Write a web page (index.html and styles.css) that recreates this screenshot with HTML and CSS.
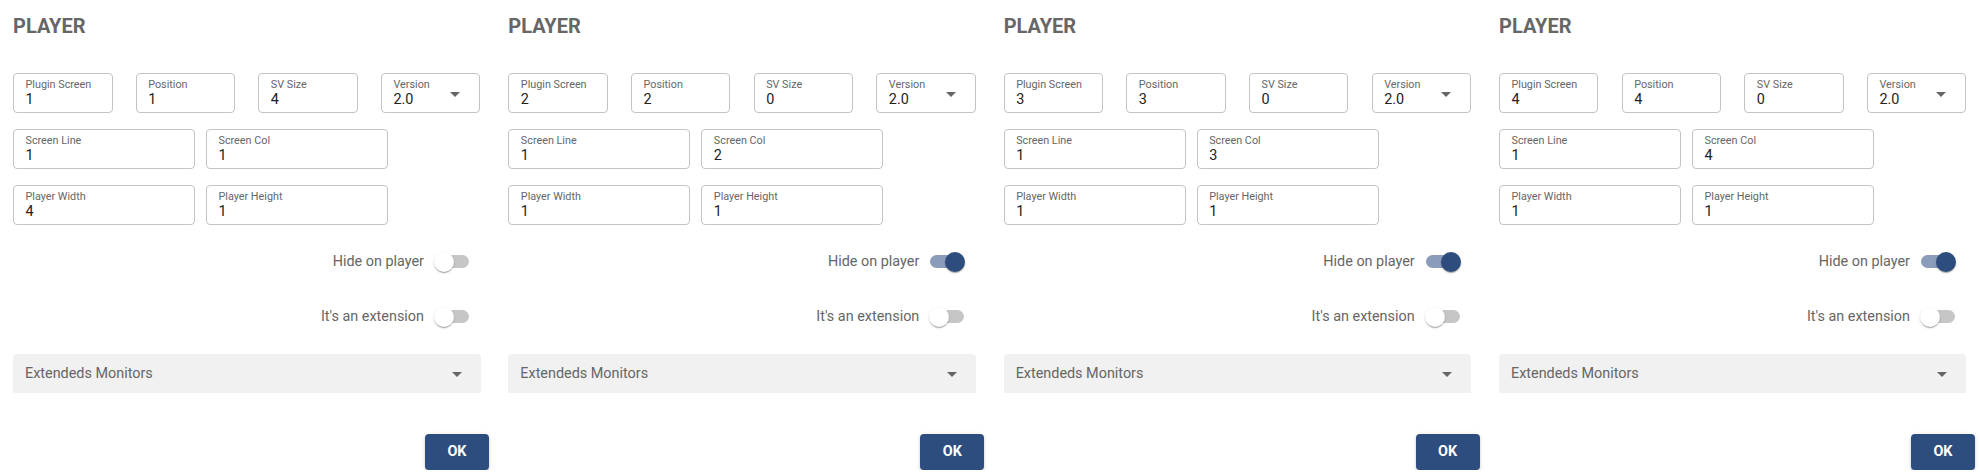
FILE: index.html
```html
<!DOCTYPE html>
<html>
<head>
<meta charset="utf-8">
<link rel="stylesheet" href="styles.css">
</head>
<body>
<div class="board">
  <section class="panel">
    <h2 class="title">PLAYER</h2>
    <div class="fields">
      <div class="row row-4">
        <div class="field"><div class="fc"><span class="lbl">Plugin Screen</span><span class="val">1</span></div></div>
        <div class="field"><div class="fc"><span class="lbl">Position</span><span class="val">1</span></div></div>
        <div class="field"><div class="fc"><span class="lbl">SV Size</span><span class="val">4</span></div></div>
        <div class="field"><div class="fc"><span class="lbl">Version</span><span class="val">2.0</span></div><span class="caret"></span></div>
      </div>
      <div class="row row-2">
        <div class="field"><div class="fc"><span class="lbl">Screen Line</span><span class="val">1</span></div></div>
        <div class="field"><div class="fc"><span class="lbl">Screen Col</span><span class="val">1</span></div></div>
      </div>
      <div class="row row-2">
        <div class="field"><div class="fc"><span class="lbl">Player Width</span><span class="val">4</span></div></div>
        <div class="field"><div class="fc"><span class="lbl">Player Height</span><span class="val">1</span></div></div>
      </div>
    </div>
    <div class="toggles">
      <div class="trow"><span class="tlabel">Hide on player</span><span class="switch"></span></div>
      <div class="trow"><span class="tlabel">It's an extension</span><span class="switch"></span></div>
    </div>
    <div class="ext"><span class="ext-text">Extendeds Monitors</span><span class="caret"></span></div>
    <div class="actions"><button class="ok">OK</button></div>
  </section>

  <section class="panel">
    <h2 class="title">PLAYER</h2>
    <div class="fields">
      <div class="row row-4">
        <div class="field"><div class="fc"><span class="lbl">Plugin Screen</span><span class="val">2</span></div></div>
        <div class="field"><div class="fc"><span class="lbl">Position</span><span class="val">2</span></div></div>
        <div class="field"><div class="fc"><span class="lbl">SV Size</span><span class="val">0</span></div></div>
        <div class="field"><div class="fc"><span class="lbl">Version</span><span class="val">2.0</span></div><span class="caret"></span></div>
      </div>
      <div class="row row-2">
        <div class="field"><div class="fc"><span class="lbl">Screen Line</span><span class="val">1</span></div></div>
        <div class="field"><div class="fc"><span class="lbl">Screen Col</span><span class="val">2</span></div></div>
      </div>
      <div class="row row-2">
        <div class="field"><div class="fc"><span class="lbl">Player Width</span><span class="val">1</span></div></div>
        <div class="field"><div class="fc"><span class="lbl">Player Height</span><span class="val">1</span></div></div>
      </div>
    </div>
    <div class="toggles">
      <div class="trow"><span class="tlabel">Hide on player</span><span class="switch on"></span></div>
      <div class="trow"><span class="tlabel">It's an extension</span><span class="switch"></span></div>
    </div>
    <div class="ext"><span class="ext-text">Extendeds Monitors</span><span class="caret"></span></div>
    <div class="actions"><button class="ok">OK</button></div>
  </section>

  <section class="panel">
    <h2 class="title">PLAYER</h2>
    <div class="fields">
      <div class="row row-4">
        <div class="field"><div class="fc"><span class="lbl">Plugin Screen</span><span class="val">3</span></div></div>
        <div class="field"><div class="fc"><span class="lbl">Position</span><span class="val">3</span></div></div>
        <div class="field"><div class="fc"><span class="lbl">SV Size</span><span class="val">0</span></div></div>
        <div class="field"><div class="fc"><span class="lbl">Version</span><span class="val">2.0</span></div><span class="caret"></span></div>
      </div>
      <div class="row row-2">
        <div class="field"><div class="fc"><span class="lbl">Screen Line</span><span class="val">1</span></div></div>
        <div class="field"><div class="fc"><span class="lbl">Screen Col</span><span class="val">3</span></div></div>
      </div>
      <div class="row row-2">
        <div class="field"><div class="fc"><span class="lbl">Player Width</span><span class="val">1</span></div></div>
        <div class="field"><div class="fc"><span class="lbl">Player Height</span><span class="val">1</span></div></div>
      </div>
    </div>
    <div class="toggles">
      <div class="trow"><span class="tlabel">Hide on player</span><span class="switch on"></span></div>
      <div class="trow"><span class="tlabel">It's an extension</span><span class="switch"></span></div>
    </div>
    <div class="ext"><span class="ext-text">Extendeds Monitors</span><span class="caret"></span></div>
    <div class="actions"><button class="ok">OK</button></div>
  </section>

  <section class="panel">
    <h2 class="title">PLAYER</h2>
    <div class="fields">
      <div class="row row-4">
        <div class="field"><div class="fc"><span class="lbl">Plugin Screen</span><span class="val">4</span></div></div>
        <div class="field"><div class="fc"><span class="lbl">Position</span><span class="val">4</span></div></div>
        <div class="field"><div class="fc"><span class="lbl">SV Size</span><span class="val">0</span></div></div>
        <div class="field"><div class="fc"><span class="lbl">Version</span><span class="val">2.0</span></div><span class="caret"></span></div>
      </div>
      <div class="row row-2">
        <div class="field"><div class="fc"><span class="lbl">Screen Line</span><span class="val">1</span></div></div>
        <div class="field"><div class="fc"><span class="lbl">Screen Col</span><span class="val">4</span></div></div>
      </div>
      <div class="row row-2">
        <div class="field"><div class="fc"><span class="lbl">Player Width</span><span class="val">1</span></div></div>
        <div class="field"><div class="fc"><span class="lbl">Player Height</span><span class="val">1</span></div></div>
      </div>
    </div>
    <div class="toggles">
      <div class="trow"><span class="tlabel">Hide on player</span><span class="switch on"></span></div>
      <div class="trow"><span class="tlabel">It's an extension</span><span class="switch"></span></div>
    </div>
    <div class="ext"><span class="ext-text">Extendeds Monitors</span><span class="caret"></span></div>
    <div class="actions"><button class="ok">OK</button></div>
  </section>
</div>
</body>
</html>
```

FILE: styles.css
```css
* { box-sizing: border-box; }
html, body {
  margin: 0;
  padding: 0;
  background: #ffffff;
  font-family: Roboto, "Liberation Sans", Arial, sans-serif;
}
.board {
  display: grid;
  grid-template-columns: repeat(4, 476px);
  column-gap: 19.33px;
  padding-left: 13px;
}
.panel {
  display: flex;
  flex-direction: column;
  padding-top: 13.7px;
}
.title {
  margin: 0;
  font-size: 20px;
  line-height: 24px;
  font-weight: 700;
  color: #666666;
}
.fields {
  margin-top: 35.6px;
  width: 467.5px;
  display: flex;
  flex-direction: column;
  gap: 16.4px;
}
.row { display: grid; }
.row-4 {
  grid-template-columns: repeat(4, 99.5px);
  justify-content: space-between;
}
.row-2 {
  grid-template-columns: 182px 182px;
  column-gap: 11px;
}
.field {
  height: 39.5px;
  border: 1px solid #c4c4c4;
  border-radius: 4px;
  padding: 4px 12px 0 11.5px;
  display: flex;
  align-items: flex-start;
}
.fc {
  flex: 1;
  display: flex;
  flex-direction: column;
}
.lbl {
  font-size: 10.8px;
  line-height: 13px;
  color: #666666;
  white-space: nowrap;
}
.val {
  font-size: 14.4px;
  line-height: 17px;
  color: #222222;
}
.field .caret {
  align-self: center;
  margin-right: 7px;
  margin-top: -2px;
}
.caret {
  width: 0;
  height: 0;
  border-left: 5px solid transparent;
  border-right: 5px solid transparent;
  border-top: 5px solid #666666;
}
.toggles {
  margin-top: 18px;
  display: flex;
  flex-direction: column;
  gap: 17px;
  padding-right: 19px;
}
.trow {
  height: 38px;
  display: flex;
  align-items: center;
  justify-content: flex-end;
  gap: 10px;
}
.tlabel {
  font-size: 14.4px;
  color: #666666;
}
.switch {
  position: relative;
  width: 36px;
  height: 20px;
}
.switch::before {
  content: "";
  position: absolute;
  left: 1px;
  right: 1px;
  top: 3.5px;
  height: 13px;
  border-radius: 7px;
  background: #c6c6c6;
}
.switch::after {
  content: "";
  position: absolute;
  left: 0;
  top: 0;
  width: 20px;
  height: 20px;
  border-radius: 50%;
  background: #ffffff;
  box-shadow: 0 2px 1px -1px rgba(0,0,0,0.2), 0 1px 1px 0 rgba(0,0,0,0.14), 0 1px 3px 0 rgba(0,0,0,0.12);
}
.switch.on::before { background: #8c9dbb; }
.switch.on::after {
  left: 16px;
  background: #2d4d7e;
}
.ext {
  margin-top: 18px;
  width: 467.5px;
  height: 39.5px;
  background: #f1f1f1;
  border-radius: 4px 4px 0 0;
  display: flex;
  align-items: center;
  justify-content: space-between;
  padding: 0 19px 0 12px;
}
.ext-text {
  font-size: 14.4px;
  color: #666666;
}
.ext .caret { margin-top: 2px; }
.actions {
  margin-top: 40.5px;
  display: flex;
  justify-content: flex-end;
}
.ok {
  width: 64px;
  height: 36px;
  border: none;
  border-radius: 4px;
  background: #2d4d7e;
  color: #ffffff;
  font-family: Roboto, "Liberation Sans", Arial, sans-serif;
  font-size: 14.4px;
  font-weight: 700;
  padding: 0;
  box-shadow: 0 3px 1px -2px rgba(0,0,0,0.2), 0 2px 2px 0 rgba(0,0,0,0.14), 0 1px 5px 0 rgba(0,0,0,0.12);
}
```
